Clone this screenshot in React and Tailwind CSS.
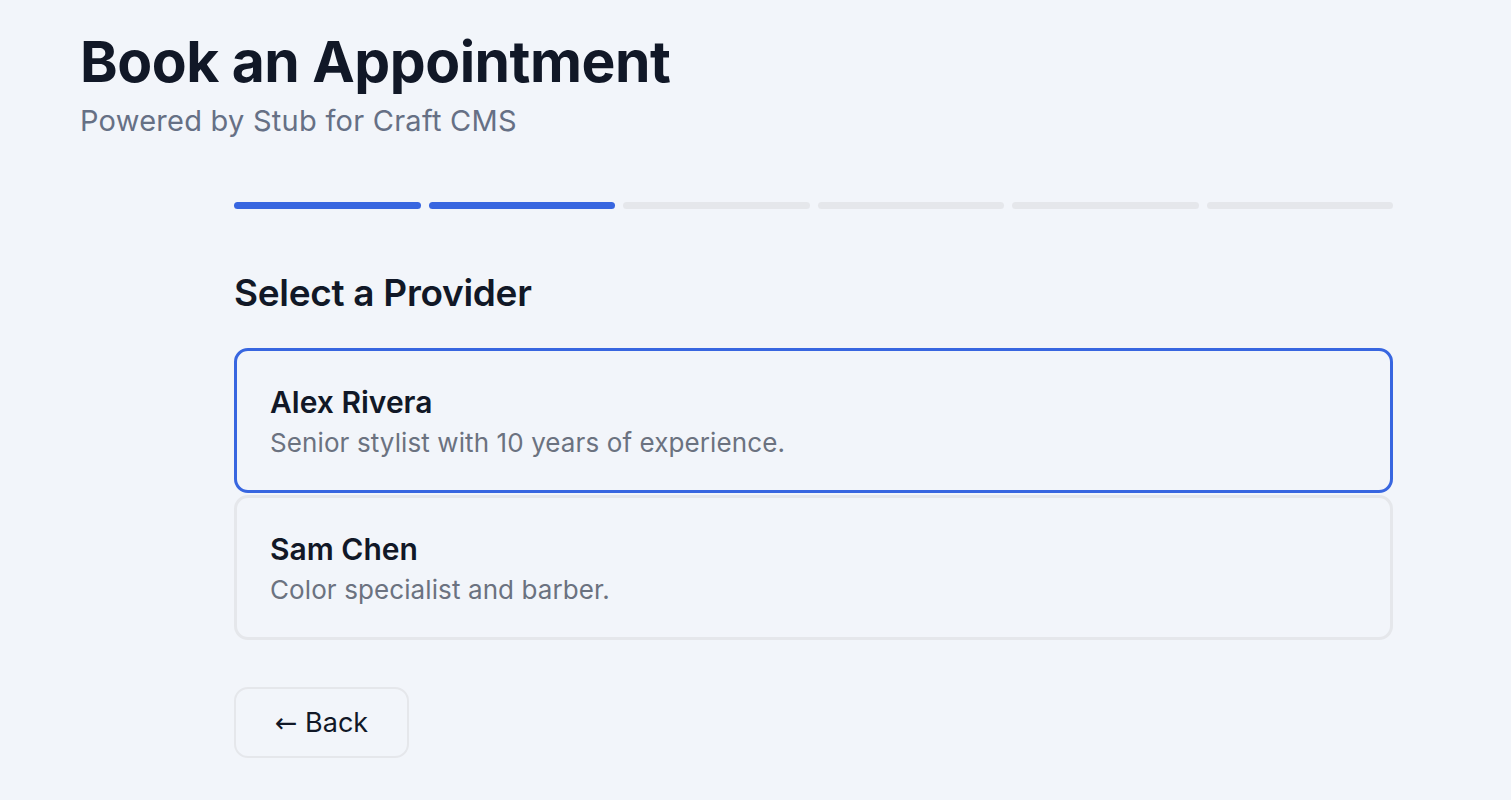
import React, { useState } from "react";

const providers = [
  { id: 1, name: "Alex Rivera", bio: "Senior stylist with 10 years of experience." },
  { id: 2, name: "Sam Chen", bio: "Color specialist and barber." },
];

const steps = [1, 2, 3, 4, 5, 6];

const App = () => {
  const [selected, setSelected] = useState(1);
  const current = 2;

  return (
    <div
      className="min-h-screen bg-[#f2f5fa] px-[80px] pt-[28px] pb-10 text-[#111827]"
      style={{ fontFamily: "Inter, 'Noto Sans', sans-serif" }}
    >
      {/* header */}
      <h1 className="text-[57px] leading-[68px] font-bold tracking-[-0.5px]">Book an Appointment</h1>
      <p className="text-[29px] leading-[36px] text-[#667085] mt-[7px] tracking-[0.25px]">
        Powered by Stub for Craft CMS
      </p>

      <div className="ml-[154px] w-[1159px] mt-[63px]">
        {/* steps */}
        <div className="flex gap-[8px]">
          {steps.map((s) => (
            <div
              key={s}
              className={
                s <= current
                  ? "flex-1 h-[7px] rounded-full bg-[#3866e0]"
                  : "flex-1 h-[7px] rounded-full bg-[#e5e7eb]"
              }
            />
          ))}
        </div>

        <h2 className="mt-[62px] text-[37px] leading-[44px] font-semibold tracking-[-0.3px]">Select a Provider</h2>

        <div className="mt-[33px] flex flex-col gap-[2px]">
          {providers.map((p) => (
            <button
              key={p.id}
              onClick={() => setSelected(p.id)}
              className={
                selected === p.id
                  ? "text-left rounded-[14px] border-[3px] border-[#3866e0] px-[33px] pt-[32px] pb-[30px]"
                  : "text-left rounded-[14px] border-[3px] border-[#e5e7eb] px-[33px] pt-[32px] pb-[30px]"
              }
            >
              <p className="text-[30px] leading-[38px] font-semibold">{p.name}</p>
              <p className="text-[26px] leading-[34px] text-[#6b7280] mt-[5px] tracking-[0.1px]">{p.bio}</p>
            </button>
          ))}
        </div>

        <button className="mt-[47px] h-[71px] w-[175px] rounded-[14px] border-2 border-[#e5e7eb] text-[27px] leading-[36px] text-[#111827]">
          <span style={{ fontFamily: "'DejaVu Sans', sans-serif" }}>←</span> Back
        </button>
      </div>
    </div>
  );
};

export default App;
